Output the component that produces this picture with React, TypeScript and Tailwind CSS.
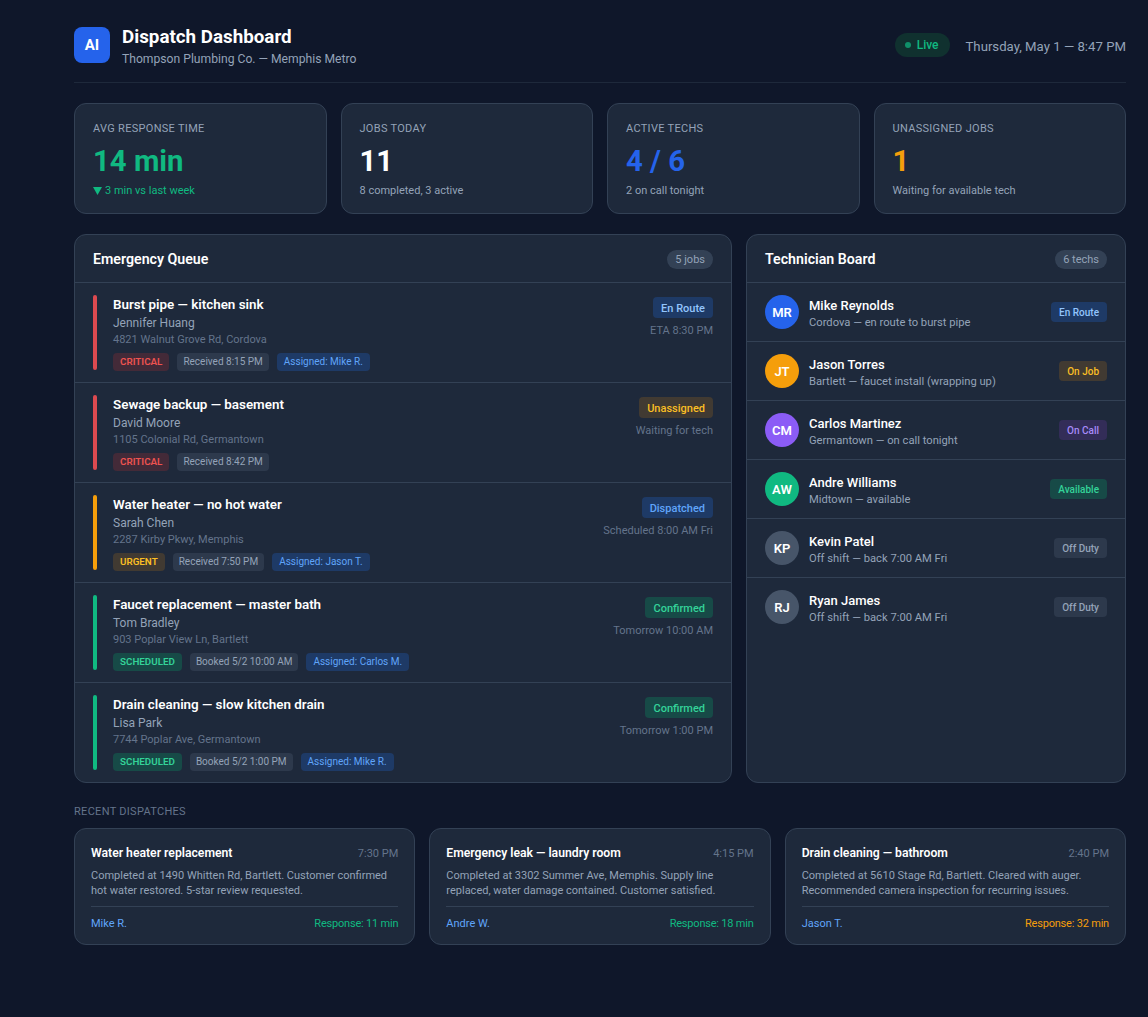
const font = { fontFamily: 'Roboto, sans-serif' }

const stats = [
  { label: 'AVG RESPONSE TIME', value: '14 min', color: 'text-[#10b981]', sub: '3 min vs last week', subColor: 'text-[#10b981]', arrow: true },
  { label: 'JOBS TODAY', value: '11', color: 'text-white', sub: '8 completed, 3 active', subColor: 'text-[#94a3b8]' },
  { label: 'ACTIVE TECHS', value: '4 / 6', color: 'text-[#2563eb]', sub: '2 on call tonight', subColor: 'text-[#94a3b8]' },
  { label: 'UNASSIGNED JOBS', value: '1', color: 'text-[#f59e0b]', sub: 'Waiting for available tech', subColor: 'text-[#94a3b8]' },
]

const statusStyles: Record<string, string> = {
  'En Route': 'bg-[#1e3a66] text-[#93c5fd]',
  Dispatched: 'bg-[#1e3a66] text-[#60a5fa]',
  Unassigned: 'bg-[#413a32] text-[#fbbf24]',
  'On Job': 'bg-[#413a32] text-[#fbbf24]',
  'On Call': 'bg-[#332d58] text-[#a78bfa]',
  Confirmed: 'bg-[#174a47] text-[#34d399]',
  Available: 'bg-[#174a47] text-[#34d399]',
  'Off Duty': 'bg-[#2d394c] text-[#94a3b8]',
}

const jobs = [
  { title: 'Burst pipe — kitchen sink', name: 'Jennifer Huang', addr: '4821 Walnut Grove Rd, Cordova', bar: 'bg-[#dc4a50]', pri: 'CRITICAL', time: 'Received 8:15 PM', who: 'Assigned: Mike R.', status: 'En Route', eta: 'ETA 8:30 PM' },
  { title: 'Sewage backup — basement', name: 'David Moore', addr: '1105 Colonial Rd, Germantown', bar: 'bg-[#dc4a50]', pri: 'CRITICAL', time: 'Received 8:42 PM', who: '', status: 'Unassigned', eta: 'Waiting for tech' },
  { title: 'Water heater — no hot water', name: 'Sarah Chen', addr: '2287 Kirby Pkwy, Memphis', bar: 'bg-[#f59e0b]', pri: 'URGENT', time: 'Received 7:50 PM', who: 'Assigned: Jason T.', status: 'Dispatched', eta: 'Scheduled 8:00 AM Fri' },
  { title: 'Faucet replacement — master bath', name: 'Tom Bradley', addr: '903 Poplar View Ln, Bartlett', bar: 'bg-[#10b981]', pri: 'SCHEDULED', time: 'Booked 5/2 10:00 AM', who: 'Assigned: Carlos M.', status: 'Confirmed', eta: 'Tomorrow 10:00 AM' },
  { title: 'Drain cleaning — slow kitchen drain', name: 'Lisa Park', addr: '7744 Poplar Ave, Germantown', bar: 'bg-[#10b981]', pri: 'SCHEDULED', time: 'Booked 5/2 1:00 PM', who: 'Assigned: Mike R.', status: 'Confirmed', eta: 'Tomorrow 1:00 PM' },
]

const priStyles: Record<string, string> = {
  CRITICAL: 'bg-[#432a38] text-[#ef5350]',
  URGENT: 'bg-[#413a32] text-[#fbbf24]',
  SCHEDULED: 'bg-[#174a47] text-[#34d399]',
}

const techs = [
  { init: 'MR', name: 'Mike Reynolds', loc: 'Cordova — en route to burst pipe', bg: 'bg-[#2563eb]', status: 'En Route' },
  { init: 'JT', name: 'Jason Torres', loc: 'Bartlett — faucet install (wrapping up)', bg: 'bg-[#f59e0b]', status: 'On Job' },
  { init: 'CM', name: 'Carlos Martinez', loc: 'Germantown — on call tonight', bg: 'bg-[#8b5cf6]', status: 'On Call' },
  { init: 'AW', name: 'Andre Williams', loc: 'Midtown — available', bg: 'bg-[#10b981]', status: 'Available' },
  { init: 'KP', name: 'Kevin Patel', loc: 'Off shift — back 7:00 AM Fri', bg: 'bg-[#475569]', status: 'Off Duty' },
  { init: 'RJ', name: 'Ryan James', loc: 'Off shift — back 7:00 AM Fri', bg: 'bg-[#475569]', status: 'Off Duty' },
]

const recent = [
  { title: 'Water heater replacement', time: '7:30 PM', text: 'Completed at 1490 Whitten Rd, Bartlett. Customer confirmed hot water restored. 5-star review requested.', tech: 'Mike R.', resp: 'Response: 11 min', color: 'text-[#10b981]' },
  { title: 'Emergency leak — laundry room', time: '4:15 PM', text: 'Completed at 3302 Summer Ave, Memphis. Supply line replaced, water damage contained. Customer satisfied.', tech: 'Andre W.', resp: 'Response: 18 min', color: 'text-[#10b981]' },
  { title: 'Drain cleaning — bathroom', time: '2:40 PM', text: 'Completed at 5610 Stage Rd, Bartlett. Cleared with auger. Recommended camera inspection for recurring issues.', tech: 'Jason T.', resp: 'Response: 32 min', color: 'text-[#f59e0b]' },
]

export default function App() {
  return (
    <div style={font} className="min-h-[1017px] bg-[#0f172a] pl-[74px] pr-[22px] pt-[25px] pb-[72px] text-white">
      {/* Header */}
      <header className="flex items-center justify-between border-b border-[#1e293b] pb-[15px]">
        <div className="flex items-start gap-3">
          <div className="mt-[2px] flex h-9 w-9 items-center justify-center rounded-lg bg-[#2563eb] pt-[1px] text-[15px] font-bold">AI</div>
          <div>
            <h1 className="text-[18.8px] font-bold leading-[24px]">Dispatch Dashboard</h1>
            <p className="mt-[2px] text-[12.15px] leading-[16px] text-[#94a3b8]">Thompson Plumbing Co. — Memphis Metro</p>
          </div>
        </div>
        <div className="flex items-center gap-4">
          <div className="mb-[2px] flex h-6 items-center gap-[6px] rounded-full bg-[#10312f] pl-[10px] pr-[11px] text-[12px] font-medium text-[#10b981]">
            <span className="h-[6px] w-[6px] rounded-full bg-[#10b981] opacity-70" />
            Live
          </div>
          <span className="pt-[1px] text-[13.2px] text-[#94a3b8]">Thursday, May 1 — 8:47 PM</span>
        </div>
      </header>

      {/* Stats */}
      <section className="mt-5 grid grid-cols-4 gap-[14px]">
        {stats.map(s => (
          <div key={s.label} className="h-[111px] rounded-xl border border-[#334155] bg-[#1e293b] px-[18px] pt-[17px]">
            <div className="text-[11px] leading-[15px] tracking-[0.3px] text-[#94a3b8]">{s.label}</div>
            <div className={`mt-[7px] text-[29.3px] font-bold leading-[36px] ${s.color}`}>{s.value}</div>
            <div className={`mt-1 flex items-center gap-[3px] text-[11px] leading-[15px] ${s.subColor}`}>
              {s.arrow && <svg width="9" height="8" viewBox="0 0 9 8"><path d="M0 0h9L4.5 8z" fill="#10b981" /></svg>}
              {s.sub}
            </div>
          </div>
        ))}
      </section>

      {/* Main panels */}
      <section className="mt-5 grid grid-cols-[658px_380px] gap-[14px]">
        <div className="overflow-hidden rounded-xl border border-[#334155] bg-[#1e293b]">
          <div className="flex h-[48px] items-center justify-between border-b border-[#334155] px-[18px] pt-[2px]">
            <h2 className="text-[14.2px] font-semibold">Emergency Queue</h2>
            <span className="rounded-full bg-[#334155] px-2 py-[2px] text-[11px] leading-[15px] text-[#94a3b8]">5 jobs</span>
          </div>
          {jobs.map((j, i) => (
            <div key={j.title} className={`flex gap-4 px-[18px] pt-3 ${i < jobs.length - 1 ? 'h-[100px] border-b border-[#334155]' : 'h-[99px]'}`}>
              <div className={`h-[75px] w-1 shrink-0 rounded-sm ${j.bar}`} />
              <div className="min-w-0 flex-1 pt-[1px]">
                <div className="text-[13.4px] font-semibold leading-[18px]">{j.title}</div>
                <div className="mt-[1px] text-[12px] leading-[17px] text-[#94a3b8]">{j.name}</div>
                <div className="text-[11px] leading-[15px] text-[#64748b]">{j.addr}</div>
                <div className="mt-[6px] flex gap-2">
                  <span className={`rounded px-[7px] py-[1px] text-[9.8px] font-semibold leading-[16px] ${priStyles[j.pri]}`}>{j.pri}</span>
                  <span className="rounded bg-[#2d394c] px-[6px] py-[1px] text-[10px] leading-[16px] text-[#94a3b8]">{j.time}</span>
                  {j.who && <span className="rounded bg-[#1e3a66] px-[7px] py-[1px] text-[10px] leading-[16px] text-[#60a5fa]">{j.who}</span>}
                </div>
              </div>
              <div className="flex flex-col items-end pt-[2px]">
                <span className={`rounded px-2 pb-[1px] pt-[3px] text-[11px] font-medium leading-[17px] ${statusStyles[j.status]}`}>{j.status}</span>
                <span className="mt-[5px] text-[11px] leading-[15px] text-[#64748b]">{j.eta}</span>
              </div>
            </div>
          ))}
        </div>

        <div className="overflow-hidden rounded-xl border border-[#334155] bg-[#1e293b]">
          <div className="flex h-[48px] items-center justify-between border-b border-[#334155] px-[18px] pt-[2px]">
            <h2 className="text-[14.2px] font-semibold">Technician Board</h2>
            <span className="rounded-full bg-[#334155] px-2 py-[2px] text-[11px] leading-[15px] text-[#94a3b8]">6 techs</span>
          </div>
          {techs.map((t, i) => (
            <div key={t.name} className={`flex h-[59px] items-center gap-[10px] border-b px-[18px] ${i < techs.length - 1 ? 'border-[#334155]' : 'border-transparent'}`}>
              <div className={`flex h-[34px] w-[34px] shrink-0 items-center justify-center rounded-full pt-[1px] text-[13px] font-semibold ${t.bg}`}>{t.init}</div>
              <div className="min-w-0 flex-1 pt-[3px]">
                <div className="text-[13px] font-medium leading-[17px]">{t.name}</div>
                <div className="mt-[1px] text-[11.2px] leading-[15px] text-[#94a3b8]">{t.loc}</div>
              </div>
              <span className={`rounded px-2 pb-[1px] pt-[3px] text-[10px] font-medium leading-[16px] ${statusStyles[t.status]}`}>{t.status}</span>
            </div>
          ))}
        </div>
      </section>

      {/* Recent */}
      <h3 className="mt-[21px] text-[11px] leading-[15px] tracking-[0.3px] text-[#64748b]">RECENT DISPATCHES</h3>
      <section className="mt-[9px] grid grid-cols-3 gap-[14px]">
        {recent.map(r => (
          <div key={r.title} className="h-[117px] rounded-xl border border-[#334155] bg-[#1e293b] px-4 pt-4">
            <div className="flex items-center justify-between">
              <span className="text-[12.2px] font-semibold leading-[16px]">{r.title}</span>
              <span className="text-[11px] leading-[15px] text-[#64748b]">{r.time}</span>
            </div>
            <p className="mt-[7px] text-[11px] leading-[15px] text-[#94a3b8]">{r.text}</p>
            <div className="mt-2 flex justify-between border-t border-[#334155] pt-[9px] text-[11px] leading-[15px]">
              <span className="text-[#60a5fa]">{r.tech}</span>
              <span className={`tracking-[-0.2px] ${r.color}`}>{r.resp}</span>
            </div>
          </div>
        ))}
      </section>
    </div>
  )
}
